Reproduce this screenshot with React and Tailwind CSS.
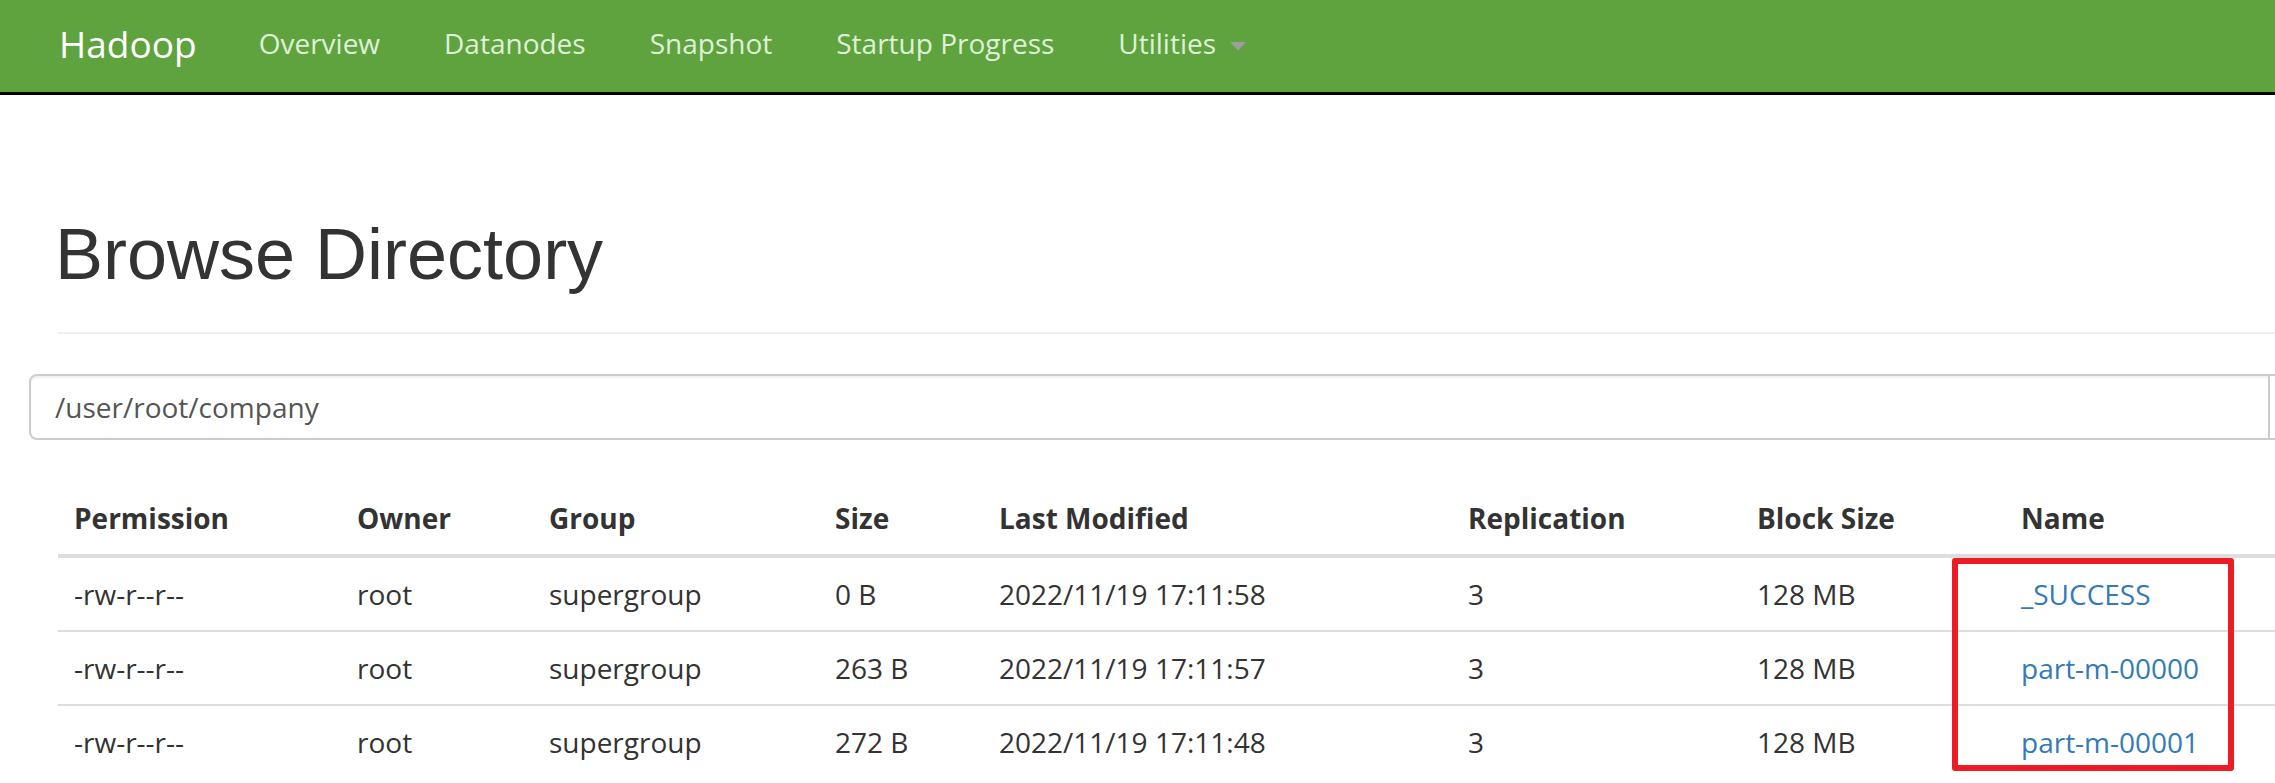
import React from "react";

const navLinks = ["Overview", "Datanodes", "Snapshot", "Startup Progress"];

const columns = [
  { label: "Permission", w: "w-[283px]" },
  { label: "Owner", w: "w-[192px]" },
  { label: "Group", w: "w-[286px]" },
  { label: "Size", w: "w-[164px]" },
  { label: "Last Modified", w: "w-[469px]" },
  { label: "Replication", w: "w-[289px]" },
  { label: "Block Size", w: "w-[264px]" },
  { label: "Name", w: "w-[300px]" },
];

const files = [
  { perm: "-rw-r--r--", owner: "root", group: "supergroup", size: "0 B", modified: "2022/11/19 17:11:58", repl: "3", block: "128 MB", name: "_SUCCESS" },
  { perm: "-rw-r--r--", owner: "root", group: "supergroup", size: "263 B", modified: "2022/11/19 17:11:57", repl: "3", block: "128 MB", name: "part-m-00000" },
  { perm: "-rw-r--r--", owner: "root", group: "supergroup", size: "272 B", modified: "2022/11/19 17:11:48", repl: "3", block: "128 MB", name: "part-m-00001" },
];

export default function App() {
  return (
    <div className="w-[2275px] h-[783px] overflow-hidden bg-white text-[#333] font-['Open_Sans',sans-serif]">
      {/* Navbar */}
      <nav className="h-[95px] bg-[#5fa33e] border-b-[3px] border-black flex items-start pl-[59px]">
        <a className="pt-[25px] text-[37px] leading-none text-white mr-[62px]">Hadoop</a>
        <ul className="flex items-start gap-[64px] pt-[29px]">
          {navLinks.map((l) => (
            <li key={l} className="text-[28px] leading-none text-[#dff0d8]">{l}</li>
          ))}
          <li className="flex items-start text-[28px] leading-none text-[#dff0d8]">
            Utilities
            <svg className="ml-[14px] mt-[13px]" width="16" height="9" viewBox="0 0 16 9">
              <path d="M0 0 L16 0 L8 8.5 Z" fill="#9e9e9e" />
            </svg>
          </li>
        </ul>
      </nav>

      <div className="pl-[58px]">
        {/* Page header */}
        <div className="mt-[120px] pb-[18px] border-b-2 border-[#eee] w-[2300px]">
          <h1 className="-ml-[3px] mb-[20px] text-[72px] leading-[1.1] font-['Liberation_Sans',Arial,sans-serif] text-[#333]">
            Browse Directory
          </h1>
        </div>
      </div>

      {/* Path input */}
      <div className="mt-[40px] pl-[29px] flex">
        <div className="w-[2241px] h-[66px] shrink-0 border-2 border-[#ccc] rounded-l-[8px] px-[24px] flex items-center text-[28px] text-[#555] shadow-[inset_0_2px_2px_rgba(0,0,0,0.06)]">
          /user/root/company
        </div>
        <div className="w-[80px] h-[66px] shrink-0 border-2 border-l-0 border-[#ccc] bg-white"></div>
      </div>

      {/* Listing */}
      <div className="relative mt-[42px] ml-[58px]">
        <table className="table-fixed border-collapse w-[2247px] text-[28px] leading-[40px]">
          <thead>
            <tr>
              {columns.map((c) => (
                <th key={c.label} className={`${c.w} text-left font-bold px-[16px] py-[16px] border-b-4 border-[#ddd]`}>
                  {c.label}
                </th>
              ))}
            </tr>
          </thead>
          <tbody>
            {files.map((f) => (
              <tr key={f.name}>
                <td className="px-[16px] py-[16px] border-t-2 border-[#ddd]">{f.perm}</td>
                <td className="px-[16px] py-[16px] border-t-2 border-[#ddd]">{f.owner}</td>
                <td className="px-[16px] py-[16px] border-t-2 border-[#ddd]">{f.group}</td>
                <td className="px-[16px] py-[16px] border-t-2 border-[#ddd]">{f.size}</td>
                <td className="px-[16px] py-[16px] border-t-2 border-[#ddd]">{f.modified}</td>
                <td className="px-[16px] py-[16px] border-t-2 border-[#ddd]">{f.repl}</td>
                <td className="px-[16px] py-[16px] border-t-2 border-[#ddd]">{f.block}</td>
                <td className="px-[16px] py-[16px] border-t-2 border-[#ddd]">
                  <a className="text-[#337ab7]">{f.name}</a>
                </td>
              </tr>
            ))}
          </tbody>
        </table>
        {/* annotation box */}
        <div className="absolute left-[1894px] top-[76px] w-[282px] h-[213px] border-[6px] border-[#ed1c24] rounded-[3px] pointer-events-none"></div>
      </div>
    </div>
  );
}
